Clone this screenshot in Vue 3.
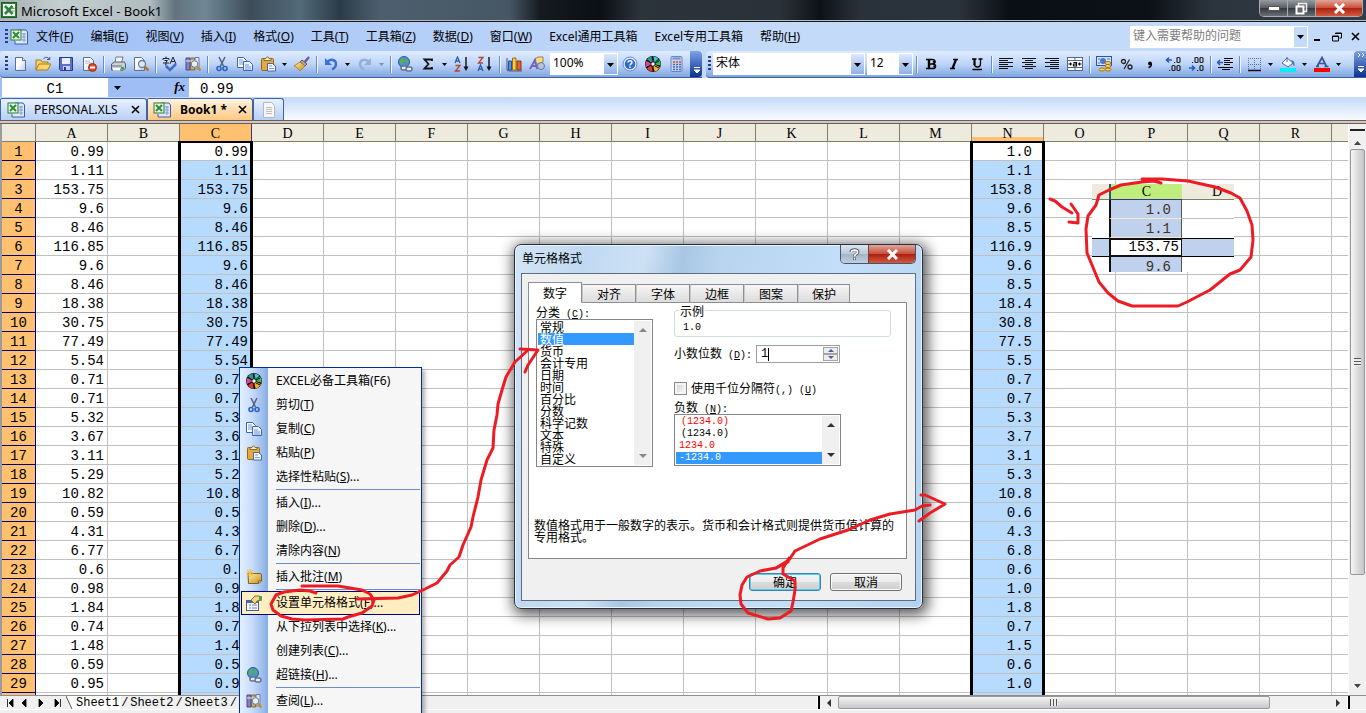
<script setup>
const menus = [
  ['文件', 'F'], ['编辑', 'E'], ['视图', 'V'], ['插入', 'I'], ['格式', 'O'], ['工具', 'T'],
  ['工具箱', 'Z'], ['数据', 'D'], ['窗口', 'W'], ['Excel通用工具箱', ''], ['Excel专用工具箱', ''], ['帮助', 'H']
]
const standardTools = [
  'new', 'open', 'save', 'perm', '|', 'print', 'preview', '|', 'spell', 'research', '|',
  'cut', 'copy', 'paste', 'v', 'brush', '|', 'undo', 'v', 'redo', 'vg', '|',
  'link', 'sum', 'v', 'sorta', 'sortz', '|', 'chart', 'draw'
]
const afterZoom = ['help', 'wheel', 'calc']
const formatTools = [
  '|', 'bold', 'italic', 'under', '|', 'left', 'center', 'right', 'merge', '|',
  'money', 'percent', 'comma', 'incdec', 'decdec', '|', 'indent', '|',
  'border', 'v', 'fill', 'v', 'color', 'v'
]
const contextItems = [
  { t: 'EXCEL必备工具箱(F6)', i: 'wheel' },
  { t: '剪切', k: 'T', i: 'cut' },
  { t: '复制', k: 'C', i: 'copy' },
  { t: '粘贴', k: 'P', i: 'paste' },
  { t: '选择性粘贴', k: 'S', e: '...' },
  { sep: true },
  { t: '插入', k: 'I', e: '...' },
  { t: '删除', k: 'D', e: '...' },
  { t: '清除内容', k: 'N' },
  { sep: true },
  { t: '插入批注', k: 'M', i: 'note' },
  { sep: true },
  { t: '设置单元格格式', k: 'F', e: '...', i: 'props', hot: true },
  { t: '从下拉列表中选择', k: 'K', e: '...' },
  { t: '创建列表', k: 'C', e: '...' },
  { t: '超链接', k: 'H', e: '...', i: 'link' },
  { sep: true },
  { t: '查阅', k: 'L', e: '...', i: 'research' }
]
const columns = [...'ABCDEFGHIJKLMNOPQR', '']
const values = [0.99, 1.11, 153.75, 9.6, 8.46, 116.85, 9.6, 8.46, 18.38, 30.75, 77.49, 5.54, 0.71, 0.71, 5.32,
  3.67, 3.11, 5.29, 10.82, 0.59, 4.31, 6.77, 0.6, 0.98, 1.84, 0.74, 1.48, 0.59, 0.95]
const rounded = ['1.0', '1.1', '153.8', '9.6', '8.5', '116.9', '9.6', '8.5', '18.4', '30.8', '77.5', '5.5', '0.7', '0.7', '5.3',
  '3.7', '3.1', '5.3', '10.8', '0.6', '4.3', '6.8', '0.6', '1.0', '1.8', '0.7', '1.5', '0.6', '1.0']
const cell = (c, r) => (c === 'A' || c === 'C' ? values[r - 1] : c === 'N' ? rounded[r - 1] : '')
const tabs = ['数字', '对齐', '字体', '边框', '图案', '保护']
const categories = ['常规', '数值', '货币', '会计专用', '日期', '时间', '百分比', '分数', '科学记数', '文本', '特殊', '自定义']
</script>

<template>
  <div class="app">
    <svg class="defs" aria-hidden="true">
      <defs>
        <linearGradient id="gPage" x2="1" y2="1"><stop offset=".4" stop-color="#fff" /><stop offset="1" stop-color="#b9c8e6" /></linearGradient>
        <linearGradient id="gGold" x2="1" y2="1"><stop offset="0" stop-color="#fff3ae" /><stop offset="1" stop-color="#c58a18" /></linearGradient>
      </defs>
      <symbol id="i-excel" viewBox="0 0 16 16">
        <rect x=".5" y=".5" width="15" height="15" fill="#2e7d3a" stroke="#1d5c2a" /><rect x="2" y="2" width="12" height="12" fill="#f3f8f0" />
        <path d="M4 4l7.500 8M11.500 4L4 12" stroke="#2e8540" stroke-width="2.600" /><path d="M10.500 6.500h3M10.500 9h3" stroke="#6d9b74" />
      </symbol>
      <symbol id="i-book" viewBox="0 0 18 16">
        <path d="M8 1h8l1.500 2v12H5v-3" fill="#dfe9fb" stroke="#3c5fa8" /><path d="M14 4v9M12 5h4M12 8h4M12 11h4" stroke="#7d9bd6" />
        <rect x="1" y="1" width="10" height="10" fill="#e9f6e4" stroke="#2b7b36" /><path d="M3 3l6 6M9 3L3 9" stroke="#2e8b3d" stroke-width="2" />
      </symbol>
      <symbol id="i-new" viewBox="0 0 16 16"><path d="M3.500 1.500h7l3 3v10h-10z" fill="url(#gPage)" stroke="#5c6f94" /><path d="M10.500 1.500v3h3" fill="#dfe7f7" stroke="#5c6f94" /></symbol>
      <symbol id="i-open" viewBox="0 0 16 16">
        <path d="M1 14V4h5l1 2h6v2" fill="#f5d36c" stroke="#a87a1c" /><path d="M1 14l3-6h12l-3.500 6z" fill="#ffd568" stroke="#a87a1c" /><path d="M8.500 3c1.500-2.500 4.500-2 5.500 0m.8-2v2.500H12" fill="none" stroke="#39557c" />
      </symbol>
      <symbol id="i-save" viewBox="0 0 16 16"><path d="M1.500 1.500h13v13h-12l-1-1z" fill="#5b6fd0" stroke="#2a3a91" /><path d="M4 2h8v6H4z" fill="#e9efff" /><path d="M5 10h7v4H5z" fill="#c8cfe9" /><path d="M6 11h2v3H6z" fill="#253688" /></symbol>
      <symbol id="i-perm" viewBox="0 0 16 16"><path d="M2.500 1.500h7l3 3v10h-10z" fill="url(#gPage)" stroke="#5c6f94" /><path d="M4 5h5M4 7h6" stroke="#a8b6d6" /><circle cx="11.500" cy="11.500" r="4" fill="#df4b26" stroke="#a42a12" /><path d="M9 11.500h5" stroke="#fff" stroke-width="2" /></symbol>
      <symbol id="i-print" viewBox="0 0 16 16"><path d="M5 7l1-6h7l-1.500 6" fill="#fff" stroke="#6d7689" /><path d="M1.500 8l3-2h10l1 2v4l-2 2h-12z" fill="#c9ced9" stroke="#555f73" /><path d="M2 10h10" stroke="#68758c" /><path d="M3 12h7v2.500H3z" fill="#fff" /><path d="M11 12h3" stroke="#33b13b" stroke-width="2" /></symbol>
      <symbol id="i-preview" viewBox="0 0 16 16"><path d="M1.500 1.500h7l3 3v10h-10z" fill="url(#gPage)" stroke="#5c6f94" /><circle cx="9" cy="8" r="3.500" fill="#d3e9f7" stroke="#6f7f98" stroke-width="1.300" /><path d="M11.500 10.500l4 4" stroke="#bd6b27" stroke-width="2.400" /></symbol>
      <symbol id="i-spell" viewBox="0 0 16 16"><path d="M4 .5v1.500M1 4V2.500h6V4M2.500 4.500h3L4 6v3H3M1 7h6M8 8l3-7 3 7M9 5.500h4" fill="none" stroke="#20242e" /><path d="M4 10l4 4 6-6" fill="none" stroke="#3d6dcd" stroke-width="2.600" /></symbol>
      <symbol id="i-research" viewBox="0 0 16 16"><path d="M1 2h4v12H1z" fill="#8580c4" stroke="#4a4690" /><path d="M5.500 2h4v12h-4z" fill="#c9a96b" stroke="#866a34" /><path d="M10 1.500h4V13h-4z" fill="#dde7fa" stroke="#6a7da5" /><path d="M1 5h4M5 5h5" stroke="#eee" /><circle cx="9.500" cy="8" r="3.300" fill="#e3f1fb" stroke="#6c7d9c" /><path d="M12 10.500l3.500 4" stroke="#c88a2c" stroke-width="2.400" /></symbol>
      <symbol id="i-cut" viewBox="0 0 16 16"><path d="M5 1l4.500 9M11 1L6.500 10" stroke="#54627e" stroke-width="1.500" /><circle cx="5" cy="12.500" r="2" fill="none" stroke="#2b62c2" stroke-width="1.600" /><circle cx="11" cy="12.500" r="2" fill="none" stroke="#2b62c2" stroke-width="1.600" /></symbol>
      <symbol id="i-copy" viewBox="0 0 16 16"><path d="M.5 1.500h6l3 3v7h-9z" fill="#fff" stroke="#3e64b5" /><path d="M6.500 5.500h6l3 3v6h-9z" fill="#eaf1ff" stroke="#3e64b5" /><path d="M2 4h4M2 6h4M2 8h4M8 9h4M8 11h6M8 13h6" stroke="#6f93d8" /></symbol>
      <symbol id="i-paste" viewBox="0 0 16 16"><rect x="1.500" y="2.500" width="12" height="12" rx="1" fill="#e5ab3a" stroke="#966616" /><path d="M4 4.500h7v-2H9a1.500 1.500 0 0 0-3 0H4z" fill="#f8edc7" stroke="#7e6a3a" /><path d="M7.500 7.500h5l3 2.500v5h-8z" fill="#f4f8ff" stroke="#4664a8" /><path d="M9 10h3M9 12.500h5" stroke="#7d98cf" /></symbol>
      <symbol id="i-brush" viewBox="0 0 16 16"><path d="M15 1l-5 6" stroke="#6a5aa8" stroke-width="2.500" /><path d="M8 4l5 4-2 2-5-4z" fill="#b9a0a0" stroke="#6b5552" /><path d="M6 6l5 4-5 5C4 12 2 11 0 10z" fill="url(#gGold)" stroke="#b28323" /></symbol>
      <symbol id="i-undo" viewBox="0 0 16 16"><path d="M4 6c4-4 9-2 9 2 0 3-2 4.500-4 5.500" fill="none" stroke="#3a6fd6" stroke-width="2.400" /><path d="M2 2v7h7z" fill="#3a6fd6" /></symbol>
      <symbol id="i-redo" viewBox="0 0 16 16"><path d="M12 6C8 2 3 4 3 8c0 3 2 4.500 4 5.500" fill="none" stroke="#94afd8" stroke-width="2.400" /><path d="M14 2v7H7z" fill="#94afd8" /></symbol>
      <symbol id="i-link" viewBox="0 0 16 16"><circle cx="7" cy="6" r="5.500" fill="#4d8fd8" stroke="#2a5a9c" /><path d="M3 3c3-2 5 0 4 2S5 9 3 8zM9 2c2 1 3 4 2 5L8 6z" fill="#56b154" /><rect x="4" y="10" width="6" height="4" rx="2" fill="#e4e9f2" stroke="#65738f" stroke-width="1.500" /><rect x="9" y="11" width="6" height="4" rx="2" fill="#e4e9f2" stroke="#65738f" stroke-width="1.500" /></symbol>
      <symbol id="i-sum" viewBox="0 0 16 16"><path d="M12 5V3.500H4.500L8.500 8l-4 4.500H12V11" fill="none" stroke="#111" stroke-width="1.800" /></symbol>
      <symbol id="i-sorta" viewBox="0 0 16 16"><path d="M1 7l2.500-6L6 7M2 5h3" fill="none" stroke="#2f5dab" stroke-width="1.300" /><path d="M1.500 9.500H6L1.500 15H6" fill="none" stroke="#b14435" stroke-width="1.300" /><path d="M12 1v12" stroke="#111" stroke-width="1.400" /><path d="M9.500 10.500h5L12 15z" fill="#111" /></symbol>
      <symbol id="i-sortz" viewBox="0 0 16 16"><path d="M1 15l2.500-6L6 15M2 13h3" fill="none" stroke="#2f5dab" stroke-width="1.300" /><path d="M1.500 1.500H6L1.500 7H6" fill="none" stroke="#b14435" stroke-width="1.300" /><path d="M12 1v12" stroke="#111" stroke-width="1.400" /><path d="M9.500 10.500h5L12 15z" fill="#111" /></symbol>
      <symbol id="i-chart" viewBox="0 0 16 16"><path d="M1 2v12l2 1h13" fill="none" stroke="#4b5876" /><path d="M2.500 5h3v9h-3z" fill="#5a8fe0" stroke="#27519d" /><path d="M6.500 2h3.500v12H6.500z" fill="#f3ce47" stroke="#9a7412" /><path d="M11 5h4v9h-4z" fill="#e2622c" stroke="#94330e" /></symbol>
      <symbol id="i-draw" viewBox="0 0 16 16"><path d="M6 3l3-2h5v5l-3 2H6z" fill="#f6dc80" stroke="#9c8340" /><circle cx="12" cy="10" r="3.500" fill="#b8c2d8" stroke="#6a7690" /><path d="M1 13l5-9 2 9M3 10h4.500" fill="none" stroke="#7666c4" stroke-width="2" /></symbol>
      <symbol id="i-help" viewBox="0 0 16 16"><circle cx="8" cy="8" r="7" fill="#eef4ff" stroke="#5d86d6" /><circle cx="8" cy="8" r="5.300" fill="#2e6bd3" /><path d="M6 6.500c0-2.500 4-2.500 4 0C10 8 8 7.800 8 9.500M8 10.500V12" fill="none" stroke="#fff" stroke-width="1.500" /></symbol>
      <symbol id="i-wheel" viewBox="0 0 16 16"><circle cx="8" cy="8" r="8" fill="#111" /><g fill="none" stroke-width="5"><path d="M8 3a5 5 0 0 1 3.500 1.500" stroke="#44c4e8" /><path d="M12 5a5 5 0 0 1 1 4" stroke="#38b75a" /><path d="M12.500 10A5 5 0 0 1 9 13" stroke="#f3b22d" /><path d="M8 13a5 5 0 0 1-4-2" stroke="#e63a2e" /><path d="M3.500 10a5 5 0 0 1 0-4" stroke="#d34a9e" /><path d="M4 5a5 5 0 0 1 3-2" stroke="#2d9b84" /></g><path d="M8 1l1 5M14 5l-4 2M14 12l-4-2M8 15l-1-5M2 11l4-2M2 4l4 3" stroke="#111" /><circle cx="8" cy="8" r="1.700" fill="#fff" /></symbol>
      <symbol id="i-calc" viewBox="0 0 16 16"><rect x="3" y=".5" width="11" height="15" rx="1" fill="#c3d4f3" stroke="#6c86bb" /><path d="M4.500 2.500h8" stroke="#7192cf" stroke-width="2" /><path d="M5 6h2M8 6h2M11 6h2" stroke="#d34a3a" stroke-width="1.500" /><path d="M5 8.500h2M8 8.500h2M11 8.500h2M5 11h2M8 11h2M11 11h2M5 13.500h2M8 13.500h2M11 13.500h2" stroke="#4c6ba9" stroke-width="1.500" /></symbol>
      <symbol id="i-bold" viewBox="0 0 16 16"><path d="M3 3.500h6q3 0 3 2.200T9 8H6M6 8h3.500q3 0 3 2.300t-3 2.200H3M5.800 3.500v9" fill="none" stroke="#000" stroke-width="1.600" /><path d="M6 3.500v9M11 5v1.500M11.500 9.500v1.500" stroke="#000" stroke-width="2.400" /></symbol>
      <symbol id="i-italic" viewBox="0 0 16 16"><path d="M7 3.500h5M4 12.500h5" stroke="#000" stroke-width="1.300" /><path d="M10 3.500l-3.500 9" stroke="#000" stroke-width="2.200" /></symbol>
      <symbol id="i-under" viewBox="0 0 16 16"><path d="M3 3h4.500M9.500 3h4M11.500 3v5q0 3-3 3T5.300 8M3.500 13.500h9.500" fill="none" stroke="#000" stroke-width="1.300" /><path d="M5.500 3v6" stroke="#000" stroke-width="2.200" /></symbol>
      <symbol id="i-left" viewBox="0 0 16 16"><path d="M1 2.500h14M1 4.500h9M1 6.500h14M1 8.500h9M1 10.500h14M1 12.500h9" stroke="#111" /></symbol>
      <symbol id="i-center" viewBox="0 0 16 16"><path d="M1 2.500h14M4 4.500h8M1 6.500h14M4 8.500h8M1 10.500h14M4 12.500h8" stroke="#111" /></symbol>
      <symbol id="i-right" viewBox="0 0 16 16"><path d="M1 2.500h14M6 4.500h9M1 6.500h14M6 8.500h9M1 10.500h14M6 12.500h9" stroke="#111" /></symbol>
      <symbol id="i-merge" viewBox="0 0 16 16"><rect x=".5" y="1.500" width="15" height="13" fill="#fff" stroke="#51658f" /><path d="M1 4.500h14M1 11.500h14M8 2v2M8 12v2" stroke="#51658f" /><path d="M1.500 8H5M11 8h3.500M3.500 6.500v3M12.500 6.500v3M6.500 6.500h3V10h-3V8h3" fill="none" stroke="#000" stroke-width="1.200" /></symbol>
      <symbol id="i-money" viewBox="0 0 16 16"><rect x=".5" y=".5" width="15" height="9" fill="#d4e3fb" stroke="#2b55ac" /><circle cx="7" cy="5" r="3" fill="#4a78d0" /><path d="M2 3h2M11 3h3M2 7h2" stroke="#4a78d0" /><ellipse cx="12" cy="7" rx="3" ry="1.500" fill="#ffd860" stroke="#a46f0d" /><ellipse cx="12" cy="10" rx="3" ry="1.500" fill="#ffd860" stroke="#a46f0d" /><ellipse cx="12" cy="13.500" rx="3" ry="1.500" fill="#ffd860" stroke="#a46f0d" /><ellipse cx="6" cy="13.500" rx="3" ry="1.500" fill="#ffd860" stroke="#a46f0d" /></symbol>
      <symbol id="i-percent" viewBox="0 0 16 16"><circle cx="4.500" cy="5.500" r="2" fill="none" stroke="#222" stroke-width="1.300" /><circle cx="11" cy="11" r="2" fill="none" stroke="#222" stroke-width="1.300" /><path d="M10.500 3.500L5 13" stroke="#222" stroke-width="1.200" /></symbol>
      <symbol id="i-comma" viewBox="0 0 16 16"><circle cx="8" cy="7.500" r="1.900" fill="#000" /><path d="M9.500 8q0 3-3 3.500" fill="none" stroke="#000" stroke-width="1.300" /></symbol>
      <symbol id="i-incdec" viewBox="0 0 16 16"><path d="M1 4h6M4 1.500L1.500 4 4 6.500" fill="none" stroke="#2558c4" stroke-width="1.500" /><g fill="none" stroke="#222" stroke-width="1.200"><rect x="12" y="1.500" width="3" height="5" rx="1" /><rect x="7" y="9.500" width="3" height="5" rx="1" /><rect x="12" y="9.500" width="3" height="5" rx="1" /><path d="M9 6.500h1.200M4 14.500h1.200" /></g></symbol>
      <symbol id="i-decdec" viewBox="0 0 16 16"><path d="M1 12h6M4 9.500L6.500 12 4 14.500" fill="none" stroke="#2558c4" stroke-width="1.500" /><g fill="none" stroke="#222" stroke-width="1.200"><rect x="7" y="1.500" width="3" height="5" rx="1" /><rect x="12" y="1.500" width="3" height="5" rx="1" /><rect x="12" y="9.500" width="3" height="5" rx="1" /><path d="M4 6.500h1.200M9 14.500h1.200" /></g></symbol>
      <symbol id="i-indent" viewBox="0 0 16 16"><path d="M7 2.500h9M7 4.500h6M7 6.500h9M7 8.500h6M1 11.500h15M5 13.500h8" stroke="#000" stroke-width="1.200" /><path d="M0 6.500h6M3 4L.5 6.500 3 9" fill="none" stroke="#2558c4" stroke-width="1.400" /></symbol>
      <symbol id="i-border" viewBox="0 0 16 16"><path d="M2 2.500h13M2 8.500h13M2.500 2v12M8.500 2v12M14.500 2v12" stroke="#5d6f96" stroke-dasharray="1 1" /><path d="M2 14.500h13" stroke="#111" stroke-width="1.500" /></symbol>
      <symbol id="i-fill" viewBox="0 0 16 16"><path d="M2 7l5-5 6 5-5 4z" fill="#f2f7ff" stroke="#516898" /><path d="M7 1v5" stroke="#516898" /><path d="M11 4q4 0 3.500 6Q12 9 13 7z" fill="#3f78cf" /><path d="M0 12h16v4H0z" fill="#00f0f8" /></symbol>
      <symbol id="i-color" viewBox="0 0 16 16"><path d="M3 10.500l5-9 4.500 9M5 7.500h6M2 10.500h3M10.500 10.500h4" fill="none" stroke="#35569c" stroke-width="1.700" /><path d="M0 12h16v4H0z" fill="#f00" /></symbol>
      <symbol id="i-note" viewBox="0 0 16 16"><path d="M2 4.500h12q1.500 0 1.500 1.500v6l-3 2.500H2.500z" fill="url(#gGold)" stroke="#7a6321" /><path d="M12.500 14v-2h3" fill="#fff0a5" stroke="#7a6321" /><path d="M4 0v8M0 4h8M1 1l6 6M7 1L1 7" stroke="#efbd28" /></symbol>
      <symbol id="i-props" viewBox="0 0 16 16"><rect x=".5" y="5.500" width="12" height="10" fill="#f4f8ff" stroke="#44639f" /><path d="M1 7h11" stroke="#3d69bf" stroke-width="2" /><path d="M3 10h2M6 10h5M3 13h2M6 13h5" stroke="#7187ac" /><path d="M5 5l4-4h4l3 1v3l-5 1-2 3-2-2z" fill="#f6d884" stroke="#8b6d2c" /><path d="M13 1h3v4h-3z" fill="#4da653" /></symbol>
      <symbol id="i-v" viewBox="0 0 7 4"><path d="M0 0h7L3.500 4z" fill="#000" /></symbol>
      <symbol id="i-vg" viewBox="0 0 7 4"><path d="M0 0h7L3.500 4z" fill="#7e8fae" /></symbol>
      <symbol id="i-x" viewBox="0 0 9 9"><path d="M1 1l7 7M8 1L1 8" stroke="#000" stroke-width="1.600" /></symbol>
    </svg>

    <header class="titlebar">
      <svg class="ic"><use href="#i-excel" /></svg>
      <h1>Microsoft Excel - Book1</h1>
      <div class="winbtns">
        <button aria-label="最小化"><svg width="12" height="5"><rect x=".5" y=".5" width="11" height="4" fill="#fff" stroke="#555" /></svg></button>
        <button aria-label="还原"><svg width="13" height="13"><path d="M3.500 1.500h8v8h-8z" fill="none" stroke="#eee" stroke-width="1.500" /><path d="M1.500 4.500h7v7h-7z" fill="#666" stroke="#fff" stroke-width="2" /></svg></button>
        <button class="close" aria-label="关闭"><svg width="13" height="11"><path d="M2 1l9 9M11 1L2 10" stroke="#fff" stroke-width="3" /></svg></button>
      </div>
    </header>

    <nav class="menubar">
      <i class="grip"></i>
      <svg class="bookicon"><use href="#i-book" /></svg>
      <button v-for="m in menus" :key="m[0]">{{ m[0] }}<template v-if="m[1]">(<u>{{ m[1] }}</u>)</template></button>
      <div class="ask">
        <input aria-label="帮助问题" placeholder="键入需要帮助的问题">
        <button aria-label="展开"><svg class="arr"><use href="#i-v" /></svg></button>
      </div>
      <div class="docbtns">
        <button aria-label="最小化文档"><svg width="10" height="10"><path d="M1 8h6" stroke="#000" stroke-width="2" /></svg></button>
        <button aria-label="还原文档"><svg width="10" height="10"><path d="M3.500 1h6v5h-2M3 1.500h7M.5 4h6v5h-6zM0 4.500h7" fill="none" stroke="#000" /></svg></button>
        <button aria-label="关闭文档"><svg width="9" height="9"><use href="#i-x" /></svg></button>
      </div>
    </nav>

    <div class="toolbars">
      <div class="toolbar">
        <i class="grip"></i>
        <template v-for="(t, n) in standardTools" :key="n">
          <i v-if="t === '|'" class="sep"></i>
          <button v-else-if="t[0] === 'v'" class="drop" aria-label="更多"><svg class="sarr"><use :href="'#i-' + t" /></svg></button>
          <button v-else class="tool" :aria-label="t"><svg class="ic"><use :href="'#i-' + t" /></svg></button>
        </template>
        <div class="combo zoom"><select aria-label="显示比例"><option>100%</option></select><svg class="arr"><use href="#i-v" /></svg></div>
        <button v-for="t in afterZoom" :key="t" class="tool" :aria-label="t"><svg class="ic"><use :href="'#i-' + t" /></svg></button>
        <button class="overflow" aria-label="工具栏选项"><svg width="8" height="8"><path d="M1 1.500h6M1 4h6L4 7z" stroke="#fff" fill="#fff" /></svg></button>
      </div>
      <div class="toolbar second">
        <i class="grip"></i>
        <div class="combo font"><select aria-label="字体"><option>宋体</option></select><svg class="arr"><use href="#i-v" /></svg></div>
        <div class="combo size"><select aria-label="字号"><option>12</option></select><svg class="arr"><use href="#i-v" /></svg></div>
        <template v-for="(t, n) in formatTools" :key="n">
          <i v-if="t === '|'" class="sep"></i>
          <button v-else-if="t === 'v'" class="drop" aria-label="更多"><svg class="sarr"><use href="#i-v" /></svg></button>
          <button v-else class="tool" :aria-label="t"><svg class="ic"><use :href="'#i-' + t" /></svg></button>
        </template>
        <button class="overflow end" aria-label="工具栏选项"><svg width="8" height="22"><path d="M1 1l2 2-2 2M5 1l2 2-2 2" fill="none" stroke="#fff" /><path d="M1 14.500h6M1 17h6l-3 3z" stroke="#fff" fill="#fff" /></svg></button>
      </div>
    </div>

    <div class="formulabar">
      <input class="namebox" aria-label="名称框" value="C1">
      <button class="namedrop" aria-label="名称列表"><svg class="arr"><use href="#i-v" /></svg></button>
      <span class="fx">fx</span>
      <input class="formula" aria-label="编辑栏" value="0.99">
    </div>

    <div class="booktabs">
      <div class="btab"><svg class="bookicon"><use href="#i-book" /></svg><span>PERSONAL.XLS</span><button aria-label="关闭 PERSONAL.XLS"><svg width="9" height="9"><use href="#i-x" /></svg></button></div>
      <div class="btab on"><svg class="bookicon"><use href="#i-book" /></svg><span>Book1 *</span><button aria-label="关闭 Book1"><svg width="9" height="9"><use href="#i-x" /></svg></button></div>
      <button class="btab add" aria-label="新建"><svg width="14" height="16"><path d="M1.500.5h8l3 3v12h-11z" fill="#f7f7f7" stroke="#b3b9c4" /><path d="M4 5.500h6M4 7.500h6M4 9.500h6M4 11.500h6" stroke="#bcbcbc" /></svg></button>
    </div>
    <div class="orangeline"></div>

    <main class="work">
      <div class="grid">
        <table>
          <thead>
            <tr><th class="corner"></th><th v-for="c in columns" :key="c" :class="{ sel: c === 'C', half: c === 'N' }">{{ c }}</th></tr>
          </thead>
          <tbody>
            <tr v-for="r in 30" :key="r">
              <th>{{ r < 30 ? r : '' }}</th>
              <td v-for="c in columns" :key="c" :class="{ hl: (c === 'C' || c === 'N') && r > 1, acc: c === 'N' }">{{ cell(c, r) }}</td>
            </tr>
          </tbody>
        </table>
        <div class="selbox c"></div>
        <div class="selbox n"></div>
      </div>
      <div class="vscroll">
        <i class="split"></i>
        <svg width="9" height="14"><path d="M1 10h7L4.500 6z" fill="#444" /></svg>
        <div class="vthumb"><i></i></div>
        <svg width="9" height="14"><path d="M1 4h7L4.500 8z" fill="#444" /></svg>
      </div>
    </main>

    <footer class="bottom">
      <svg class="navs" width="64" height="13"><path d="M5.500 3v8M11 3v8L7 7zM24 3v8l-4-4zM37 3v8l4-4zM53 3v8l4-4zM58.500 3v8" fill="#000" stroke="#000" stroke-width=".8" /></svg>
      <div class="sheets"><svg width="8" height="13"><path d="M0 0h8v13H6z" fill="#fff" /><path d="M0 0l6 13" stroke="#555" /></svg><a href="#" class="on">Sheet1</a><i>/</i><a href="#">Sheet2</a><i>/</i><a href="#">Sheet3</a><i>/</i></div>
      <div class="hscroll">
        <i class="bar"></i>
        <svg width="18" height="13"><path d="M11 3v8L7 7z" fill="#333" /></svg>
        <div class="track"><div class="hthumb"><i></i></div></div>
        <svg width="18" height="13"><path d="M7 3v8l4-4z" fill="#333" /></svg>
        <i class="bar"></i>
      </div>
    </footer>
    <div class="status"></div>

    <figure class="inset">
      <table>
        <thead><tr><th></th><th class="g">C</th><th class="d">D</th></tr></thead>
        <tbody>
          <tr><td class="no"></td><td class="b">1.0</td><td></td></tr>
          <tr><td class="no"></td><td class="b">1.1</td><td class="no"></td></tr>
          <tr class="act"><td></td><td class="w">153.75</td><td></td></tr>
          <tr><td class="no"></td><td class="b">9.6</td><td class="no"></td></tr>
        </tbody>
      </table>
    </figure>

    <section class="dialog" role="dialog" aria-label="单元格格式">
      <div class="dtitle">
        <span>单元格格式</span>
        <div class="dbtns">
          <button aria-label="帮助"><svg width="11" height="13"><path d="M2 4c0-3 7-3 7 0 0 2.200-3.500 2-3.500 4.500M5.500 9.500V12" fill="none" stroke="#556" stroke-width="3" /><path d="M2.300 4c0-2.500 6.400-2.500 6.400 0 0 2-3.200 2-3.200 4.500M5.500 10v1.500" fill="none" stroke="#fff" stroke-width="1.600" /></svg></button>
          <button class="close" aria-label="关闭"><svg width="13" height="11"><path d="M2 1l9 9M11 1L2 10" stroke="#fff" stroke-width="3" /></svg></button>
        </div>
      </div>
      <div class="dbody">
        <div class="dtabs" role="tablist"><button v-for="(t, n) in tabs" :key="t" role="tab" :class="{ on: n === 0 }">{{ t }}</button></div>
        <div class="panel">
          <div class="cols">
            <div class="leftcol">
              <div class="lbl">分类<span class="lat"> (<u>C</u>):</span></div>
              <div class="lbox cat">
                <ul role="listbox" aria-label="分类"><li v-for="(c, n) in categories" :key="c" role="option" :class="{ on: n === 1 }">{{ c }}</li></ul>
                <div class="mini dim"><svg width="8" height="4"><path d="M0 4h8L4 0z" /></svg><svg width="8" height="4"><path d="M0 0h8L4 4z" /></svg></div>
              </div>
            </div>
            <div class="rightcol">
              <fieldset><legend>示例</legend><span class="lat">1.0</span></fieldset>
              <div class="decimals">
                <label for="dec">小数位数<span class="lat"> (<u>D</u>):</span></label>
                <div class="spin"><input id="dec" value="1"><i class="caret"></i><div class="ud"><button aria-label="增加"><svg width="6" height="3"><path d="M0 3h6L3 0z" fill="#4a5fa8" /></svg></button><button aria-label="减少"><svg width="6" height="3"><path d="M0 0h6L3 3z" fill="#4a5fa8" /></svg></button></div></div>
              </div>
              <label class="thou"><input type="checkbox"><span>使用千位分隔符<span class="lat">(,) (<u>U</u>)</span></span></label>
              <div class="lbl neg">负数<span class="lat"> (<u>N</u>):</span></div>
              <div class="lbox num">
                <ul role="listbox" aria-label="负数" class="lat"><li role="option" class="red par">(1234.0)</li><li role="option" class="par">(1234.0)</li><li role="option" class="red">1234.0</li><li role="option" class="on">-1234.0</li></ul>
                <div class="mini"><svg width="8" height="4"><path d="M0 4h8L4 0z" /></svg><svg width="8" height="4"><path d="M0 0h8L4 4z" /></svg></div>
              </div>
            </div>
          </div>
          <p>数值格式用于一般数字的表示。货币和会计格式则提供货币值计算的专用格式。</p>
        </div>
        <div class="actions"><button class="ok">确定</button><button>取消</button></div>
      </div>
    </section>

    <div class="context" role="menu">
      <template v-for="(m, n) in contextItems" :key="n">
        <div v-if="m.sep" class="csep"></div>
        <button v-else role="menuitem" :class="{ hot: m.hot }">
          <span class="ci"><svg v-if="m.i" class="ic"><use :href="'#i-' + m.i" /></svg></span><span>{{ m.t }}<template v-if="m.k">(<u>{{ m.k }}</u>){{ m.e }}</template></span>
        </button>
      </template>
    </div>

    <svg class="marks" aria-hidden="true">
      <path d="M316 593L310 591L300 590L284 592L276 595L271 604L273 610L281 616L292 619L305 620L343 619L348 617L362 613L372 606L374 600L370 594L362 590L350 588L338 586L302 586" />
      <path d="M357 599L398 598L412 595L425 589L437 583L447 571L450 565L459 557L463 545L471 527L473 517L478 497L481 480L487 460L493 448L494 430L497 415L498 404L502 390L506 377L515 362L527 351" />
      <path d="M520 349L538 350L528 365L525 372" />
      <path d="M930 505L922 506L915 510L890 514L870 520L848 530L820 539L795 551L789 560L776 568L760 571L747 577L742 585L740 595L741 604L748 613L768 619L780 618L791 611L793 602L795 590L795 581L783 574L783 568L789 558" />
      <path d="M776 568L788 562M921 495L925 495L945 504L930 513L919 521" />
      <path d="M1161 183L1154 181L1142 182L1121 185L1109 190L1099 195L1096 205L1088 216L1086 229L1087 253L1092 265L1099 282L1108 293L1118 301L1132 306L1178 306L1187 302L1210 290L1230 274L1240 270L1251 257L1253 240L1252 225L1247 211L1240 198L1231 193L1215 187L1188 181L1162 179L1142 179" />
      <path d="M1050 199L1055 201L1062 207L1072 213M1071 204L1078 214L1078 223L1069 222" />
    </svg>
  </div>
</template>

<style>
html, body { margin: 0; overflow: hidden; }
</style>

<style scoped>
* { box-sizing: border-box; }
.app {
  position: relative; display: flex; flex-direction: column; height: 100vh; overflow: hidden;
  background: #fff; color: #000;
  font: 12px/16px "Noto Sans", "Noto Sans CJK SC", sans-serif;
}
button, input, select { font: inherit; color: inherit; margin: 0; padding: 0; border: 0; background: none; border-radius: 0; outline: 0; }
button { display: inline-flex; align-items: center; justify-content: center; white-space: nowrap; }
svg { display: block; flex: none; }
.defs { position: absolute; width: 0; height: 0; }
.ic { width: 16px; height: 16px; }
.bookicon { width: 18px; height: 16px; }
.arr { width: 7px; height: 4px; }
.sarr { width: 5px; height: 3px; }
.grip { flex: none; width: 3px; height: 16px; background: repeating-linear-gradient(#27417f 0 2px, transparent 2px 4px); }

.titlebar {
  flex: none; display: flex; align-items: center; gap: 4px; height: 22px; border-bottom: 1px solid #15191f;
  background: linear-gradient(90deg, #a5afb2 0, #c5cfd0 60px, #b0bcc0 150px, #62737e 175px, #6f8795 205px, #3d4d59 250px, #526a7a 300px, #2b3b48 340px, #4d5f6e 380px, #465664 510px, #151a20 540px, #0b0f14 600px, #2b333b 640px, #2a3138 780px, #0d1218 820px, #29313a 860px, #2a323b 960px, #0a0f15 1010px, #0c1117 1150px, #2b343d 1210px, #353e46);
  box-shadow: inset 0 -1px #b7bcc0;
}
h1 { margin: 0; font-size: 13px; font-weight: 400; }
.titlebar .ic { margin: 0 0 1px 1px; }
.winbtns { display: flex; align-self: flex-start; margin-left: auto; height: 17px; margin-right: 3px; border: 1px solid #aab; border-top: 0; border-radius: 0 0 5px 5px; overflow: hidden; }
.winbtns button { width: 28px; background: linear-gradient(#969ba0, #565c63 50%, #33383e 51%, #6a6f75); border-right: 1px solid #aaa; }
.winbtns .close { width: 46px; border: 0; }
.winbtns .close, .dbtns .close { background: linear-gradient(#e0a598, #c9513b 48%, #aa2010 50%, #d0593f); }

.menubar { flex: none; display: flex; align-items: center; height: 29px; padding-left: 5px; background: linear-gradient(90deg, #9ebef5, #c3daf9 700px); }
.menubar .bookicon { margin: 0 1px 0 2px; }
.menubar > button { margin: 0 10px 0 7px; height: 20px; }
.ask { display: flex; margin-left: auto; width: 178px; height: 22px; border: 1px solid #fff; background: #fff; }
.ask input { flex: 1; min-width: 0; padding: 0 2px 2px; }
.ask input::placeholder { color: #7d7d7d; opacity: 1; }
.ask button { width: 13px; background: #c3daf9; }
.docbtns { display: flex; align-items: center; gap: 9px; margin: 0 6px 0 5px; }

.toolbars { flex: none; display: flex; height: 27px; background: #c3daf9; }
.toolbar { display: flex; align-items: center; height: 27px; padding-left: 5px; background: linear-gradient(#dfecff, #bed5f8 50%, #7fa5e2); border-bottom: 1px solid #3b619c; border-radius: 4px 0 0 4px; }
.second { flex: 1; margin-left: 4px; padding-left: 2px; }
.tool { flex: none; width: 23px; height: 22px; }
.drop { flex: none; width: 11px; height: 22px; }
.sep { flex: none; width: 6px; height: 17px; border-left: 1px solid #6a8ccb; box-shadow: inset 1px 0 #f1f6ff; margin-left: 3px; margin-right: -3px; }
.combo { flex: none; position: relative; height: 22px; margin-left: 2px; border: 1px solid #fff; background: linear-gradient(#dbe8fc, #8fb1e7); }
.combo select { appearance: none; display: block; width: calc(100% - 13px); height: 20px; padding: 0 0 2px 2px; background: #fff; }
.combo .arr { position: absolute; right: 3px; top: 9px; pointer-events: none; }
.zoom { width: 68px; }
.font { width: 152px; }
.size { width: 46px; }
.overflow { flex: none; width: 12px; height: 26px; margin-left: 3px; padding: 0 0 3px 2px; align-items: flex-end; background: linear-gradient(#7ea3e6, #0a3290); border-radius: 0 4px 4px 0; }
.overflow.end { margin-left: auto; border-radius: 4px 0 0 0; }

.formulabar { flex: none; display: flex; height: 19px; background: #9ebef5; font-family: "Liberation Mono", monospace; font-size: 14px; }
.formulabar input { height: 19px; background: #fff; padding-top: 2px; }
.formulabar .namebox { width: 106px; margin-left: 2px; text-align: center; }
.namedrop { width: 19px; }
.fx { width: 62px; padding-right: 4px; text-align: right; font: italic 700 13px/18px "Liberation Serif", serif; }
.formulabar .formula { flex: 1; min-width: 0; padding-left: 11px; }
.booktabs { flex: none; display: flex; align-items: flex-end; height: 24px; background: linear-gradient(#c4daf9, #f8fbff); border-bottom: 1px solid #3d63a8; }
.btab { display: flex; align-items: center; width: 147px; height: 22px; padding: 0 6px; border: 1px solid #3d63a8; border-bottom: 0; border-radius: 2px 3px 0 0; background: linear-gradient(#e8f1ff, #b8d0f6); }
.btab span { flex: 1; padding-left: 9px; }
.btab.on { width: 106px; padding: 0 5px; font-weight: 700; background: linear-gradient(#fff2df, #ffc982); }
.btab.add { width: 31px; justify-content: center; }
.orangeline { flex: none; height: 3px; background: #ffc070; border-bottom: 1px solid #3d63a8; }

.work { flex: 1; display: flex; min-height: 0; }
.grid { flex: 1; min-width: 0; position: relative; overflow: hidden; border-left: 2px solid #9c9c9c; }
table { border-collapse: separate; border-spacing: 0; }
.grid table { width: max-content; }
.grid th, .grid td { width: 72px; min-width: 72px; height: 19px; padding: 3px 3px 0 0; border: solid #c0c0c0; border-width: 0 1px 1px 0; font: 14px/15px "Liberation Mono", monospace; text-align: right; white-space: nowrap; }
.grid th { padding: 3px 0 0; text-align: center; }
.grid thead th { height: 18px; padding: 2px 0 0; line-height: 15px; background: #eeeade; border-color: #7f7f68; font-family: "Liberation Serif", serif; }
.grid tr > th:first-child { width: 34px; min-width: 34px; }
.grid tbody th { background: #ffc070; border-color: #000080; }
.grid thead .sel { background: #ffc070; border-color: #3a3a70; }
.grid thead .half { background: linear-gradient(#eeeade 13px, #ffc070 13px); }
.grid .hl { background: #b6dbff; }
.grid .acc { padding-right: 11px; }
.selbox { position: absolute; top: 17px; bottom: 0; width: 75px; border: solid #000; border-width: 2px 3px 0; }
.selbox.c { left: 176px; }
.selbox.n { left: 968px; }
.vscroll { flex: none; display: flex; flex-direction: column; align-items: center; width: 18px; padding: 0 0 1px; background: #f0f0f0; border-left: 1px solid #fff; }
.split { width: 15px; height: 7px; margin-bottom: 4px; border-bottom: 2px solid #222; }
.vthumb { display: flex; align-items: center; justify-content: center; width: 15px; height: 426px; margin-bottom: auto; border: 1px solid #979797; border-radius: 2px; background: linear-gradient(90deg, #f6f6f6, #dcdcde 50%, #c4c5c9); }
.vthumb i { width: 7px; height: 8px; background: repeating-linear-gradient(#555 0 1px, #eee 1px 3px); }

.bottom { flex: none; display: flex; align-items: stretch; height: 14px; background: #f0f0f0; border-top: 1px solid #8f8f8f; }
.navs { margin-left: 2px; }
.sheets { display: flex; font: 12px/15px "Liberation Mono", monospace; }
.sheets a { color: inherit; text-decoration: none; padding: 0 2px; }
.sheets a.on { background: #fff; }
.sheets i { width: 7px; text-align: center; font-style: normal; }
.hscroll { display: flex; margin-left: auto; width: 40.2%; height: 13px; }
.bar { width: 3px; border-left: 1px solid #fff; border-right: 2px solid #000; }
.track { flex: 1; }
.hthumb { display: flex; align-items: center; justify-content: center; width: 88%; height: 13px; border: 1px solid #999; border-radius: 2px; background: linear-gradient(#f5f5f5, #dedee0 50%, #c8c9cd); }
.hthumb i { width: 8px; height: 7px; background: repeating-linear-gradient(90deg, #555 0 1px, #eee 1px 3px); }
.hscroll .bar:last-child { margin-right: 16px; }
.status { flex: none; height: 4px; background: #f0f0f0; border-top: 1px solid #fff; }

.inset { position: absolute; left: 1092px; top: 184px; width: 142px; height: 88px; margin: 0; overflow: hidden; background: #fff; }
.inset table { width: 142px; table-layout: fixed; }
.inset th, .inset td { height: 19px; padding: 3px 0 0; font: 14px/15px "Liberation Mono", monospace; text-align: right; border-bottom: 1px solid #c0c0c0; }
.inset th { height: 16px; padding: 0; font-family: "Liberation Serif", serif; text-align: center; background: #eeeade; border-color: #7f7f68; }
.inset th:first-child { width: 17px; }
.inset th:nth-child(2) { width: 73px; }
.inset .g { background: #c0ee7c; border-left: 2px solid #24606a; border-bottom-color: #403090; }
.inset .d { padding-left: 18px; }
.inset .no { border-color: transparent; }
.inset .b { padding-right: 10px; color: #40331d; background: #c0d1ed; border-left: 2px solid #111; border-right: 1px solid #555; border-bottom-color: #f5e8cf; }
.inset .act td { padding-top: 0; background: #c0d1ed; border-top: 1px solid #000; border-bottom: 1px solid #000; }
.inset .act .w { padding-right: 2px; background: #fff; border: 2px solid #111; border-right-width: 1px; }

.dialog {
  position: absolute; left: 514px; top: 244px; width: 409px; padding: 0 6px 7px; border: 1px solid #28323c; border-radius: 7px;
  background: linear-gradient(100deg, #d3e5f6, #c0d9f1 15%, #cde1f5 28%, #a9c6e4 36%, #b9d4ef 44%, #c3def8 70%, #b4d3f2);
  box-shadow: inset 0 0 0 1px #e6f3fd, 2px 3px 14px 3px rgba(0, 0, 0, .65);
}
.dtitle { display: flex; height: 28px; padding-left: 1px; }
.dtitle > span { flex: 1; line-height: 27px; }
.dbtns { display: flex; height: 19px; border: 1px solid #47566b; border-top: 0; border-radius: 0 0 5px 5px; overflow: hidden; }
.dbtns button { width: 27px; background: linear-gradient(#dbe6f0, #b9c9d8 50%, #a2b5c6 51%, #bfd0df); }
.dbtns .close { width: 47px; border-left: 1px solid #7b3a36; }
.dbody { padding: 8px 8px 9px 6px; border: 1px solid #5b6e84; background: #f0f0f0; font-family: "Noto Sans CJK SC", sans-serif; }
.dtabs { display: flex; align-items: flex-end; height: 21px; margin-bottom: -1px; }
.dtabs button { width: 54px; height: 19px; border: 1px solid #8b8e95; border-left-color: #c9c9c9; background: linear-gradient(#f6f6f6, #dcdcdc); }
.dtabs .on { position: relative; height: 21px; border-color: #8b8e95; border-bottom: 0; background: #fff; }
.dtabs button:last-child { width: 52px; }
.panel { height: 257px; padding: 1px 7px 0; border: 1px solid #82858d; background: #fff; }
.cols { display: flex; gap: 21px; }
.leftcol { width: 117px; }
.rightcol { width: 217px; }
.lbl { height: 15px; line-height: 15px; }
.lat { font-family: "Liberation Mono", monospace; font-size: 10px; line-height: 10px; white-space: pre; }
.lbox { display: flex; border: 1px solid #82858d; padding: 1px; background: #fff; }
ul { flex: 1; margin: 0; padding: 0; list-style: none; }
li { height: 12px; line-height: 12px; padding-left: 2px; }
li.on { background: #3399ff; color: #fff; }
.cat { height: 148px; }
.num { width: 167px; height: 52px; }
.num li { padding-left: 3px; }
.num .par { padding-left: 5px; }
.red { color: #f00; }
.mini { display: flex; flex-direction: column; align-items: center; justify-content: space-between; width: 17px; padding: 7px 0; background: #f0f0f0; fill: #333; }
.dim { fill: #888; }
fieldset { min-width: 0; height: 33px; margin: 0; padding: 0 0 0 8px; border: 1px solid #d0dbe4; border-radius: 3px; line-height: 16px; }
legend { margin-left: -4px; padding: 0 1px; line-height: 13px; }
.decimals { display: flex; align-items: center; height: 18px; margin-top: 8px; }
.decimals label { width: 82px; height: 18px; line-height: 16px; }
.spin { position: relative; display: flex; width: 84px; height: 18px; padding: 1px; border: 1px solid #9b9ea5; }
.spin input { flex: 1; min-width: 0; padding-left: 3px; font: 12px/14px "Liberation Mono", monospace; }
.caret { position: absolute; left: 11px; top: 2px; width: 1px; height: 13px; background: #000; }
.ud { display: flex; flex-direction: column; width: 15px; }
.ud button { flex: 1; border: 1px solid #a5a5a5; background: #ececec; }
.thou { display: flex; align-items: center; height: 14px; margin-top: 18px; }
.thou input { appearance: none; width: 13px; height: 13px; margin-right: 4px; border: 1px solid #8b8b8b; background: linear-gradient(135deg, #c9cdd2, #fff); box-shadow: inset 0 0 0 2px #f4f4f4; }
.neg { margin-top: 4px; }
.panel p { margin: 52px 0 0 -2px; line-height: 12px; width: 366px; }
.actions { display: flex; justify-content: flex-end; gap: 9px; margin: 14px 5px 0 0; }
.actions button { width: 72px; height: 18px; border: 1px solid #707070; border-radius: 3px; background: linear-gradient(#f4f4f4, #ebebeb 50%, #dcdcdc 51%, #cfcfcf); box-shadow: inset 0 0 0 1px #fcfcfc; }
.actions .ok { border-color: #3c7fb1; box-shadow: inset 0 0 0 1px #50d0f2; }

.context { position: absolute; left: 239px; top: 367px; width: 183px; padding: 1px 1px 0; border: 1px solid #002d96; background: linear-gradient(90deg, #e3efff, #c8dcfa 12px, #87ade4 28px, #f6f6f6 28px); box-shadow: 3px 3px 4px rgba(0, 0, 0, .3); }
.context button { width: 100%; height: 24px; justify-content: flex-start; border: 1px solid transparent; }
.ci { width: 34px; padding-left: 4px; }
.context .hot { background: #ffeec2; border-color: #000080; }
.csep { height: 2px; margin-left: 35px; border-top: 1px solid #6a8ccb; }
.marks { position: absolute; inset: 0; width: 100%; height: 100%; pointer-events: none; fill: none; stroke: #ed1c24; stroke-width: 3; stroke-linejoin: round; stroke-linecap: round; }
</style>
